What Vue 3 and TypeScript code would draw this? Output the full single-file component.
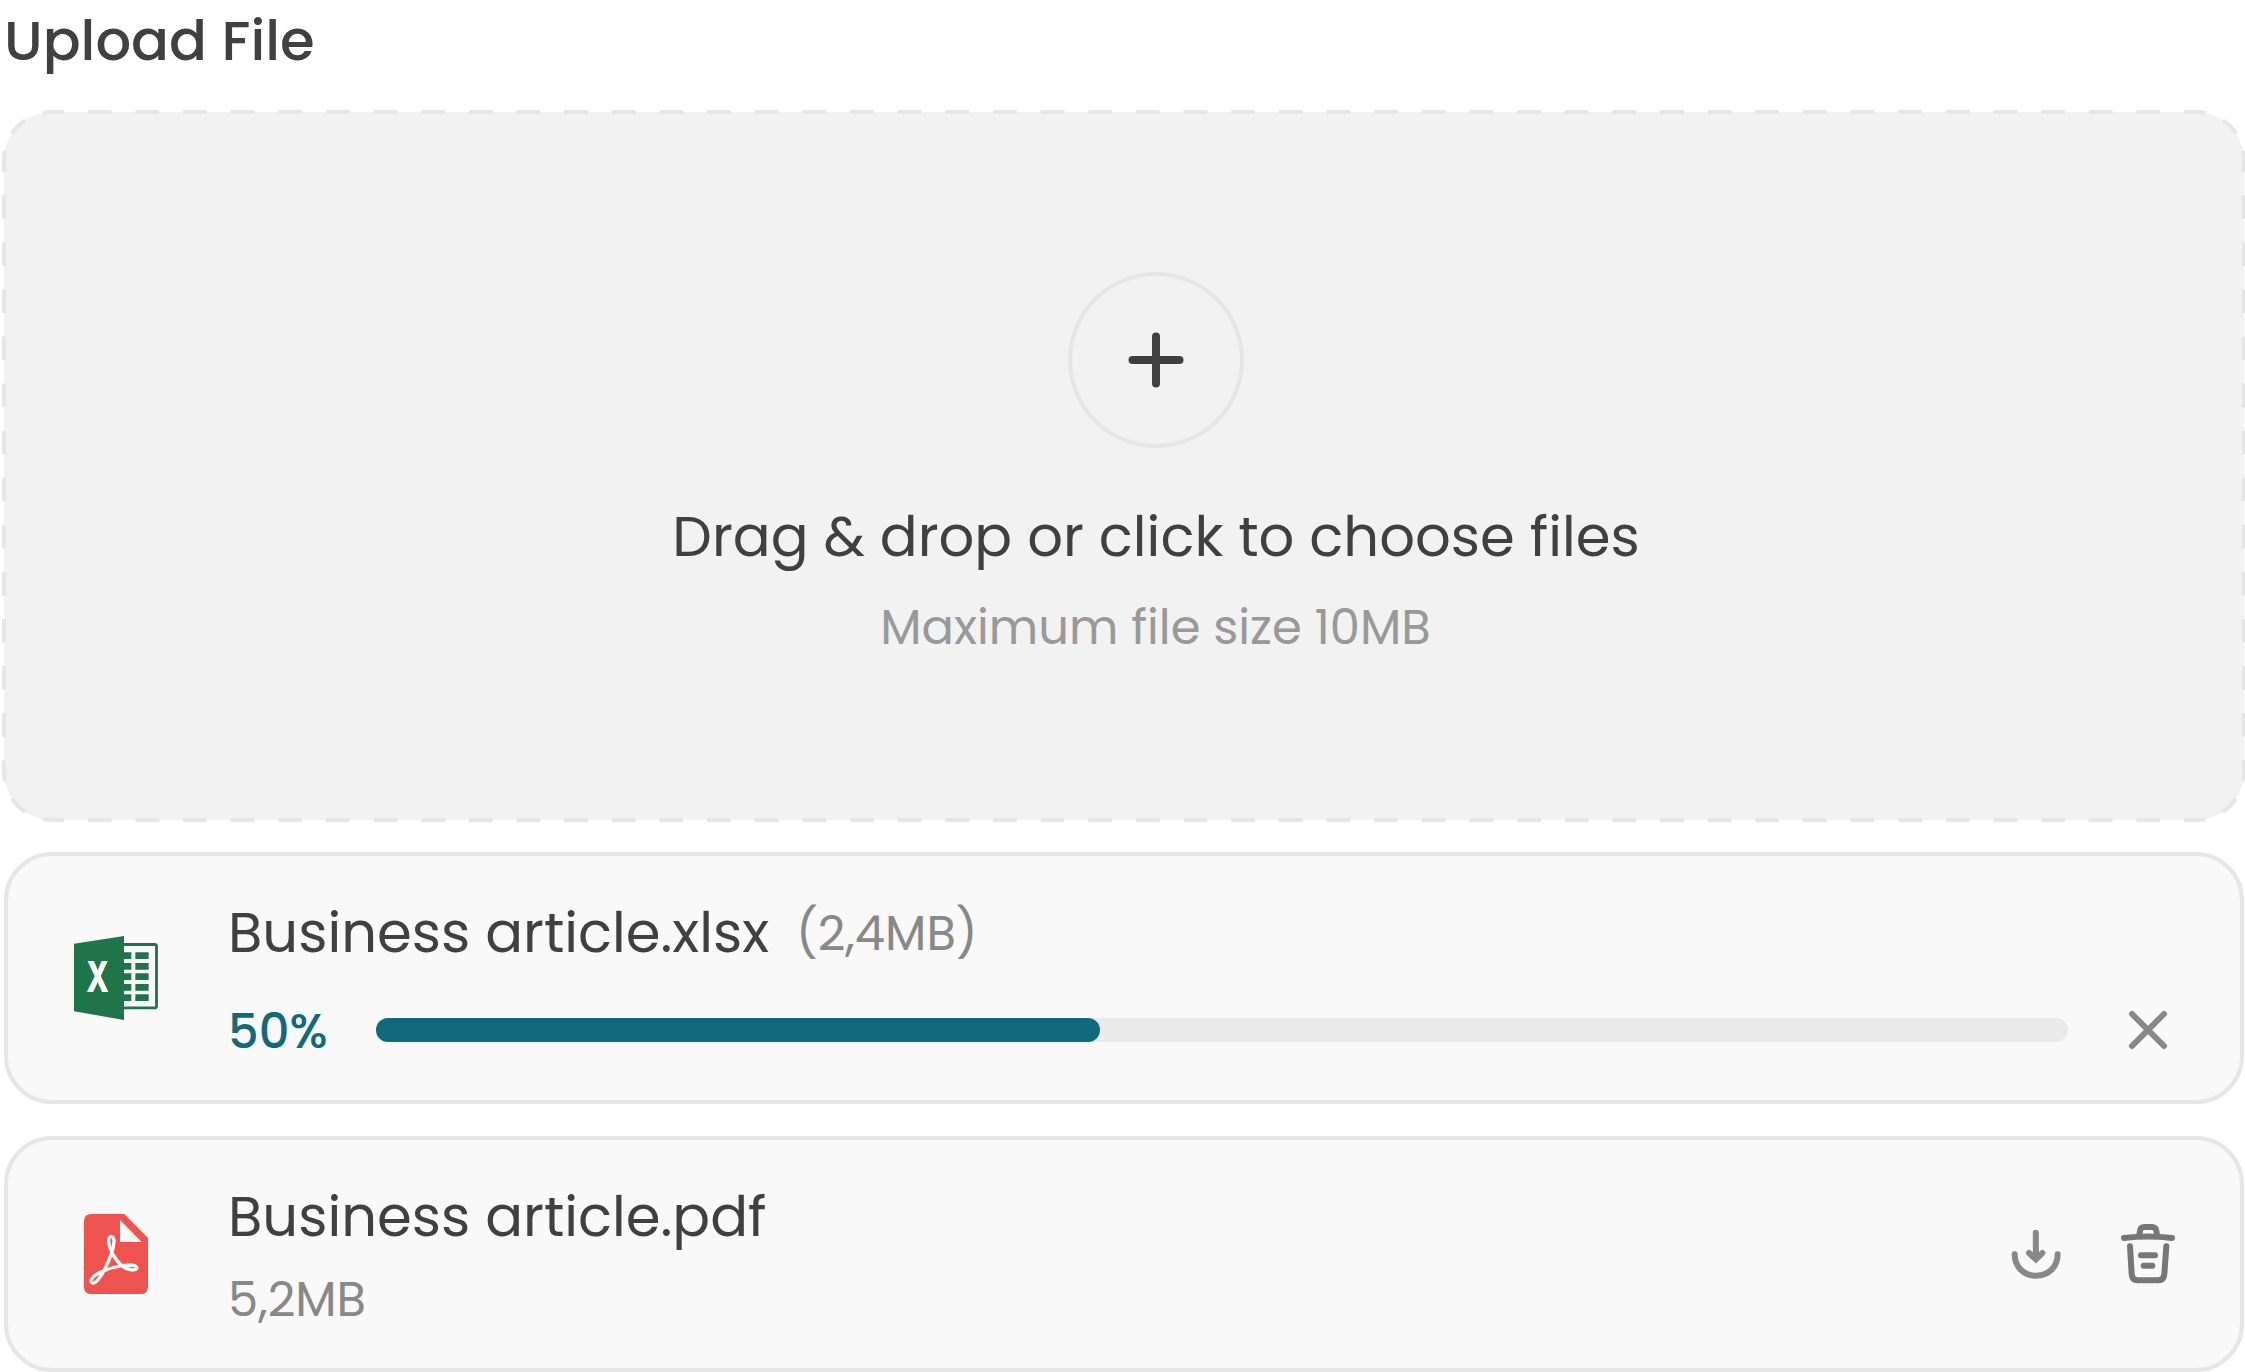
<script setup lang="ts">
interface Edge {
  d: string
  period: number
}

const uploading = { name: 'Business article.xlsx', size: '(2,4MB)', label: '50%', fill: 42.79 }
const finished = { name: 'Business article.pdf', size: '5,2MB' }

// Every straight side and every corner carries its own evenly divided dash rhythm.
const w = 2240
const h = 708
const r = 48
const horizontal = (w - 2 * r) / 45
const vertical = (h - 2 * r) / 13
const corner = (Math.PI * r) / 4

const edges: Edge[] = [
  { d: `M${r} 0H${w - r}`, period: horizontal },
  { d: `M${r} ${h}H${w - r}`, period: horizontal },
  { d: `M0 ${r}V${h - r}`, period: vertical },
  { d: `M${w} ${r}V${h - r}`, period: vertical },
  { d: `M0 ${r}A${r} ${r} 0 0 1 ${r} 0`, period: corner },
  { d: `M${w - r} 0A${r} ${r} 0 0 1 ${w} ${r}`, period: corner },
  { d: `M${w} ${h - r}A${r} ${r} 0 0 1 ${w - r} ${h}`, period: corner },
  { d: `M${r} ${h}A${r} ${r} 0 0 1 0 ${h - r}`, period: corner },
]
</script>

<template>
  <main class="upload">
    <h1 class="heading">Upload File</h1>

    <section class="dropzone">
      <svg class="outline" width="2240" height="708" viewBox="0 0 2240 708" fill="none">
        <path
          v-for="edge in edges"
          :key="edge.d"
          :d="edge.d"
          stroke="#e6e6e6"
          stroke-width="4"
          :stroke-dasharray="`${edge.period / 2} ${edge.period / 2}`"
          :stroke-dashoffset="edge.period / 4"
        />
      </svg>
      <button class="add" type="button" aria-label="Add file">
        <svg width="64" height="64" viewBox="0 0 64 64">
          <path d="M32 8.5V55.5M8.5 32H55.5" stroke="#404040" stroke-width="8" stroke-linecap="round" />
        </svg>
      </button>
      <p class="prompt">Drag &amp; drop or click to choose files</p>
      <p class="hint">Maximum file size 10MB</p>
    </section>

    <article class="card">
      <svg class="type" viewBox="54 60 288 288">
        <rect x="200" y="103.500" width="119.500" height="190" rx="5" fill="none" stroke="#20744a" stroke-width="8.500" />
        <path
          d="M218 127H244V147H218ZM256 127H296V147H256ZM218 159H244V179H218ZM256 159H296V179H256ZM218 190H244V210H218ZM256 190H296V210H256ZM218 222H244V242H218ZM256 222H296V242H256ZM218 253H244V273H218ZM256 253H296V273H256Z"
          fill="#20744a"
        />
        <path d="M72 101L222 78V330L72 304Z" fill="#20744a" />
        <text class="mark" x="109" y="247" textLength="68" lengthAdjust="spacingAndGlyphs">X</text>
      </svg>
      <div class="body">
        <div class="title">
          <span class="name">{{ uploading.name }}</span>
          <span class="size">{{ uploading.size }}</span>
        </div>
        <div class="progress">
          <span class="percent">{{ uploading.label }}</span>
          <div class="track"><div class="fill" :style="{ width: uploading.fill + '%' }"></div></div>
          <button class="action" type="button" aria-label="Cancel">
            <svg width="64" height="64" viewBox="0 0 64 64">
              <path d="M16 16L48 48M48 16L16 48" stroke="#888" stroke-width="6" stroke-linecap="round" />
            </svg>
          </button>
        </div>
      </div>
    </article>

    <article class="card done">
      <svg class="type" viewBox="24 48 288 288">
        <path d="M94 72H193L264 144V290Q264 312 242 312H94Q72 312 72 290V94Q72 72 94 72Z" fill="#ef5350" />
        <path d="M180 90V156H245Z" fill="#f9f9f9" />
        <path
          d="M146 155C145 134 163 134 162 155C161 177 149 209 133 240C122 262 106 282 97 279C88 276 94 262 111 252C138 236 182 225 210 225C237 226 235 241 217 240C190 238 169 212 157 190C149 175 147 166 146 155Z"
          fill="none"
          stroke="#f9f9f9"
          stroke-width="10"
          stroke-linejoin="round"
        />
      </svg>
      <div class="body">
        <span class="name">{{ finished.name }}</span>
        <span class="size below">{{ finished.size }}</span>
      </div>
      <div class="actions">
        <button class="action" type="button" aria-label="Download">
          <svg width="64" height="64" viewBox="42 66 192 192" fill="none" stroke="#888" stroke-width="18" stroke-linecap="round">
            <path d="M137.500 98V172M117 159L137.500 178L157 159" />
            <path d="M123 163H151L137.500 189Z" fill="#888" stroke="none" />
            <path d="M74 163C74 200 101 227.500 138 227.500C176 227.500 203 200 203 163" />
          </svg>
        </button>
        <button class="action" type="button" aria-label="Delete">
          <svg
            width="64"
            height="64"
            viewBox="378 66 192 192"
            fill="none"
            stroke="#777"
            stroke-width="18"
            stroke-linecap="round"
            stroke-linejoin="round"
          >
            <path d="M402 114Q474 105 546 114" />
            <path d="M448 106L450 92Q452 81 463 81H486Q497 81 499 92L501 106" />
            <path d="M420 139L425 222Q426 241 444 241H504Q522 241 523 222L529 139" />
            <path d="M453 165.500H495M461 197.500H487" />
          </svg>
        </button>
      </div>
    </article>
  </main>
</template>

<style>
body {
  background: #fff;
}
</style>

<style scoped>
.upload {
  box-sizing: border-box;
  width: 2245px;
  height: 1372px;
  padding-left: 4px;
  overflow: hidden;
  color: #404040;
  font-family: Poppins, Inter, sans-serif;
  white-space: nowrap;
}

h1,
p {
  margin: 0;
  font-weight: 400;
}

button {
  display: flex;
  align-items: center;
  justify-content: center;
  padding: 0;
  border: 0;
  background: none;
}

.heading {
  height: 82px;
  font-size: 56px;
  font-weight: 500;
  line-height: 82px;
}

.dropzone {
  position: relative;
  display: flex;
  flex-direction: column;
  align-items: center;
  box-sizing: border-box;
  width: 2240px;
  height: 708px;
  margin-top: 30px;
  padding: 160px 0 0 64px;
  border-radius: 48px;
  background: #f2f2f2;
}

.outline {
  position: absolute;
  top: 0;
  left: 0;
  overflow: visible;
}

.add {
  box-sizing: border-box;
  width: 176px;
  height: 176px;
  border: 4px solid #e6e6e6;
  border-radius: 50%;
}

.prompt {
  margin-top: 47px;
  font-size: 56px;
  line-height: 84px;
}

.hint {
  margin-top: 13px;
  padding-right: 1px;
  color: #999;
  font-size: 48px;
  line-height: 72px;
}

.card {
  display: flex;
  align-items: center;
  gap: 64px;
  box-sizing: border-box;
  width: 2240px;
  height: 252px;
  margin-top: 32px;
  padding: 0 60px;
  border: 4px solid #e6e6e6;
  border-radius: 48px;
  background: #f9f9f9;
}

.done {
  height: 236px;
}

.type {
  flex: none;
  width: 96px;
  height: 96px;
}

.mark {
  fill: #fff;
  font-family: Inter, sans-serif;
  font-size: 128px;
  font-weight: 800;
}

.body {
  display: flex;
  flex: 1;
  flex-direction: column;
  align-self: flex-start;
  padding-top: 35px;
}

.title {
  display: flex;
  align-items: center;
  gap: 27px;
}

.name {
  font-size: 56px;
  line-height: 84px;
}

.size {
  color: #888;
  font-size: 48px;
  line-height: 72px;
}

.title .size {
  padding-top: 1px;
}

.below {
  margin-top: 5px;
}

.progress {
  display: flex;
  align-items: center;
  gap: 48px;
  margin-top: 17px;
}

.percent {
  width: 100px;
  padding-top: 4px;
  color: #116a7b;
  font-size: 48px;
  font-weight: 500;
  line-height: 72px;
}

.track {
  flex: 1;
  height: 24px;
  border-radius: 12px;
  background: #eaeaea;
}

.fill {
  height: 24px;
  border-radius: 12px;
  background: #116a7b;
}

.actions {
  display: flex;
  gap: 48px;
}

.action {
  flex: none;
  width: 64px;
  height: 64px;
}
</style>
